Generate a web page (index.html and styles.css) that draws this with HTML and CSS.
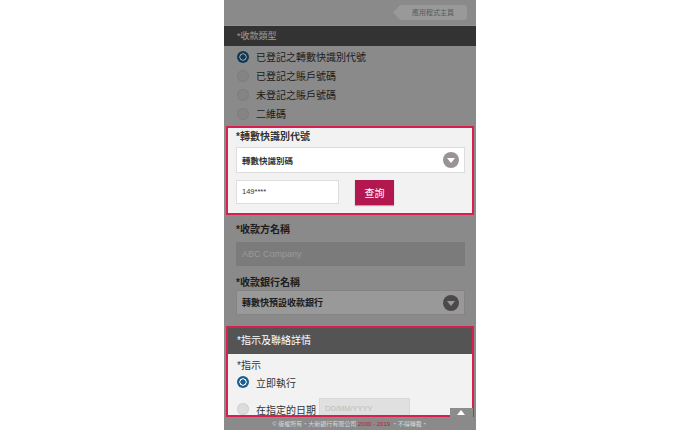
FILE: index.html
```html
<!DOCTYPE html>
<html lang="zh-TW">
<head>
    <meta charset="UTF-8">
    <meta name="viewport" content="width=device-width, initial-scale=1.0">
    <title>轉數快收款</title>
    <link rel="stylesheet" href="styles.css">
</head>
<body>

    <div id="phone">
        <div id="screen">
            <div class="top-bar">
                <a class="home-tab">應用程式主頁</a>
            </div>

            <div class="section-bar">*收款類型</div>
            <ul class="radio-list">
                <li><span class="radio checked"></span>已登記之轉數快識別代號</li>
                <li><span class="radio"></span>已登記之賬戶號碼</li>
                <li><span class="radio"></span>未登記之賬戶號碼</li>
                <li><span class="radio"></span>二維碼</li>
            </ul>

            <!-- 提示框：轉數快識別代號 -->
            <div class="spotlight box-fps">
                <div class="field-label">*轉數快識別代號</div>
                <div class="select">
                    <span>轉數快識別碼</span>
                    <span class="select-arrow"></span>
                </div>
                <div class="search-row">
                    <div class="text-input">149****</div>
                    <button class="btn-search">查詢</button>
                </div>
            </div>

            <div class="form-block">
                <div class="field-label">*收款方名稱</div>
                <div class="text-input disabled">ABC Company</div>
                <div class="field-label label-gap">*收款銀行名稱</div>
                <div class="select">
                    <span>轉數快預設收款銀行</span>
                    <span class="select-arrow"></span>
                </div>
            </div>

            <!-- 提示框：指示 -->
            <div class="spotlight box-instruction">
                <div class="section-bar">*指示及聯絡詳情</div>
                <div class="box-body">
                    <div class="sub-label">*指示</div>
                    <div class="radio-row"><span class="radio checked"></span>立即執行</div>
                    <div class="radio-row row-date">
                        <span class="radio"></span>在指定的日期
                        <span class="date-input">DD/MM/YYYY</span>
                    </div>
                </div>
            </div>

            <div id="dim-layer"></div>
        </div>

        <div id="footer">© 版權所有・大新銀行有限公司 <span class="years">2000 - 2019</span> ・不得轉載・</div>
        <button id="to-top" title="返回頁首"></button>
    </div>

</body>
</html>
```

FILE: styles.css
```css
body {
    margin: 0;
    background-color: #fff;
    font-family: "Liberation Sans", "Noto Sans CJK TC", sans-serif;
    color: #333;
}

#phone {
    position: relative;
    width: 252px;
    height: 430px;
    margin: 0 auto;
    overflow: hidden;
    background-color: #e6e6e6;
}

#screen {
    position: relative; /* 遮罩層定位用 */
    height: 419px;
    overflow: hidden;
}

/* 半透明遮罩，提示框放在它上面 */
#dim-layer {
    position: absolute;
    top: 0;
    right: 0;
    bottom: 0;
    left: 0;
    background-color: rgba(0, 0, 0, 0.4);
    z-index: 5;
}

.top-bar {
    height: 26px;
    box-sizing: border-box;
    padding: 5px 9px 0 0;
    display: flex;
    justify-content: flex-end;
    align-items: flex-start;
    border-bottom: 1px solid #f4f4f4;
}

.home-tab {
    width: 74px;
    height: 15px;
    box-sizing: border-box;
    padding-left: 6px;
    background-color: #fff;
    color: #999;
    font-size: 7px;
    line-height: 15px;
    text-align: center;
    border-radius: 0 3px 3px 0;
    clip-path: polygon(7px 0, 100% 0, 100% 100%, 7px 100%, 0 50%);
}

.section-bar {
    height: 20px;
    line-height: 20px;
    padding-left: 13px;
    background-color: #555;
    color: #fff;
    font-size: 9px;
}

.radio-list {
    list-style: none;
    margin: 0;
    padding: 1px 0 0 13px;
}

.radio-list li,
.radio-row {
    display: flex;
    align-items: center;
    gap: 7px;
    height: 19px;
    font-size: 10px;
    color: #333;
}

.radio {
    width: 12px;
    height: 12px;
    border-radius: 50%;
    flex: none;
    background-color: #dcdcdc;
    box-shadow: inset 0 0 0 1px #d2d2d2;
}
.radio.checked {
    background: radial-gradient(circle, #1b5f8f 0 2.4px, #fff 2.9px 3.4px, #1b5f8f 3.9px);
    box-shadow: none;
}

.spotlight {
    position: relative;
    z-index: 10; /* 在遮罩之上 */
    margin: 3px 2px 0;
    border: 2px solid #d81f4e;
    background-color: #f2f2f2;
}

.box-fps {
    padding: 2px 7px 8px 8px;
}

.field-label {
    height: 14px;
    line-height: 14px;
    font-size: 10px;
    font-weight: bold;
    color: #333;
    margin-bottom: 3px;
}

.select {
    height: 26px;
    box-sizing: border-box;
    padding: 0 5px 0 5px;
    display: flex;
    justify-content: space-between;
    align-items: center;
    background-color: #fff;
    border: 1px solid #ddd;
    font-size: 8.5px;
    font-weight: bold;
    color: #333;
}

.select-arrow {
    position: relative;
    width: 16px;
    height: 16px;
    border-radius: 50%;
    background-color: #9b9393;
}
.select-arrow::after {
    content: "";
    position: absolute;
    left: 4px;
    top: 6px;
    border-left: 4px solid transparent;
    border-right: 4px solid transparent;
    border-top: 5px solid #fff;
}

.search-row {
    display: flex;
    align-items: flex-start;
    margin-top: 7px;
}

.text-input {
    height: 24px;
    box-sizing: border-box;
    padding-left: 5px;
    background-color: #fff;
    border: 1px solid #ddd;
    font-size: 7.5px;
    line-height: 22px;
    color: #333;
}
.search-row .text-input {
    width: 103px;
}

.btn-search {
    width: 39px;
    height: 25px;
    margin-left: 16px;
    padding: 0;
    border: none;
    background-color: #b3174f;
    color: #fff;
    font-family: inherit;
    font-size: 10px;
    box-shadow: 0 1px 1px rgba(0, 0, 0, 0.3);
}

.form-block {
    padding: 8px 11px 0 12px;
}
.form-block .field-label {
    margin-bottom: 5px;
}
.form-block .text-input.disabled {
    background-color: #cdcdcd;
    border-color: #cdcdcd;
    color: #fff;
    font-size: 9px;
}
.form-block .label-gap {
    margin-top: 10px;
    margin-bottom: 0;
}
.form-block .select {
    height: 25px;
    font-size: 9px;
}
.form-block .select-arrow {
    background-color: #807a7a;
}

.box-instruction {
    margin-top: 11px;
    height: 91px;
    box-sizing: border-box;
    overflow: hidden;
}
.box-instruction .section-bar {
    height: 26px;
    line-height: 26px;
    padding-left: 9px;
    font-size: 10px;
    background-color: #545454;
}

.box-body {
    padding: 5px 9px 0;
}

.sub-label {
    height: 14px;
    line-height: 14px;
    font-size: 10px;
    color: #333;
}

.box-body .radio-row {
    height: 18px;
}
.box-body .row-date {
    height: 22px;
    margin-top: 7px;
}

.date-input {
    width: 91px;
    height: 22px;
    box-sizing: border-box;
    margin-left: -4px;
    padding-left: 5px;
    background-color: #e0e0e0;
    border: 1px solid #d8d8d8;
    color: #bbb;
    font-size: 7.5px;
    line-height: 20px;
}

#footer {
    height: 11px;
    line-height: 11px;
    background-color: #8a8a8a;
    color: #d8d8d8;
    font-size: 6px;
    text-align: center;
    white-space: nowrap;
}
#footer .years {
    color: #c0163f;
}

#to-top {
    position: absolute;
    right: 3px;
    bottom: 13px;
    width: 23px;
    height: 9px;
    padding: 0;
    border: none;
    background-color: #8c8c8c;
    z-index: 20;
}
#to-top::after {
    content: "";
    position: absolute;
    left: 7px;
    top: 2px;
    border-left: 4.5px solid transparent;
    border-right: 4.5px solid transparent;
    border-bottom: 5px solid #fff;
}
```
